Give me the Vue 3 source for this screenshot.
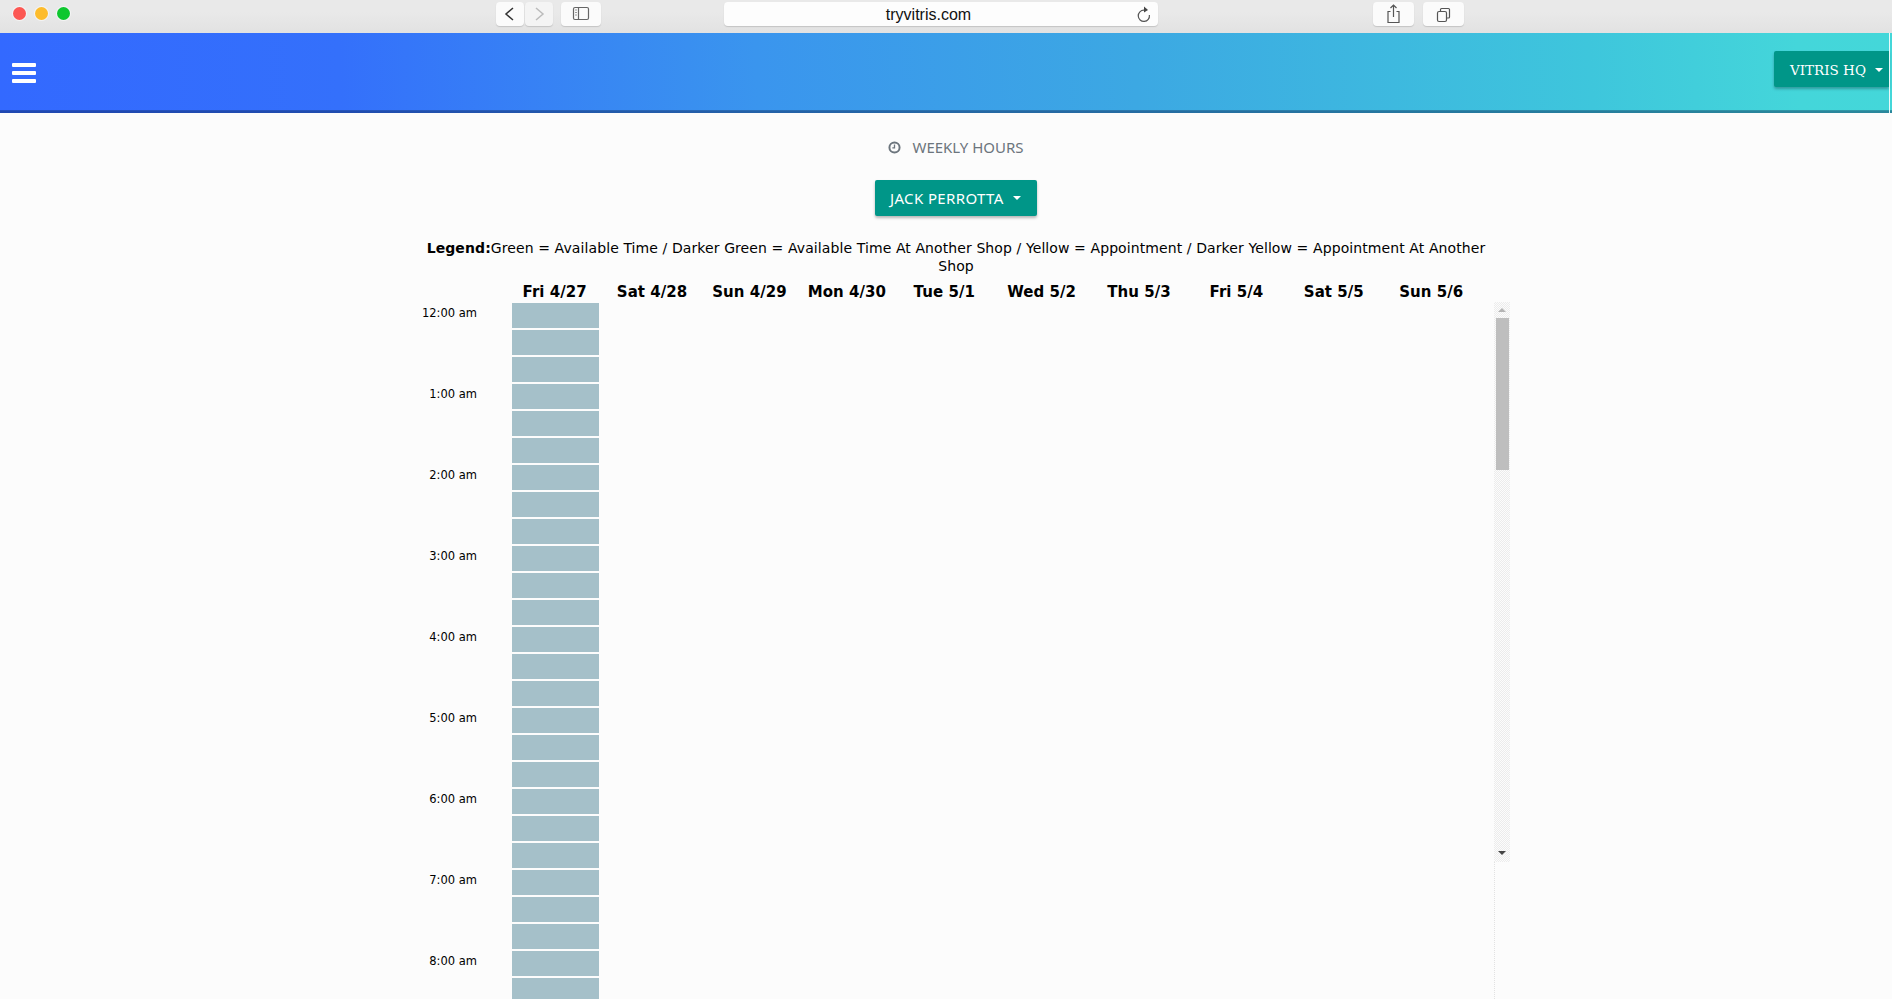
<script setup>
const days = ['Fri 4/27','Sat 4/28','Sun 4/29','Mon 4/30','Tue 5/1','Wed 5/2','Thu 5/3','Fri 5/4','Sat 5/5','Sun 5/6']
const hours = ['12:00 am','1:00 am','2:00 am','3:00 am','4:00 am','5:00 am','6:00 am','7:00 am','8:00 am']
const slots = Array.from({ length: 27 }, (_, i) => i)
</script>

<template>
  <div class="page">
    <header class="chrome">
      <div class="lights">
        <span class="light red"></span>
        <span class="light yellow"></span>
        <span class="light green"></span>
      </div>
      <div class="ch-btn back">
        <svg width="28" height="24" viewBox="0 0 28 24"><path d="M17 6 10 12 17 18" fill="none" stroke="#333" stroke-width="1.5"/></svg>
      </div>
      <div class="ch-btn forward">
        <svg width="28" height="24" viewBox="0 0 28 24"><path d="M11 6 18 12 11 18" fill="none" stroke="#bbb" stroke-width="1.5"/></svg>
      </div>
      <div class="ch-btn sidebar">
        <svg width="40" height="24" viewBox="0 0 40 24"><rect x="12.5" y="5.5" width="15" height="12" rx="1.5" fill="none" stroke="#666" stroke-width="1.2"/><path d="M17.5 5.5v12" stroke="#666" stroke-width="1.2"/><path d="M14 8h2M14 10.5h2M14 13h2" stroke="#999" stroke-width="1"/></svg>
      </div>
      <div class="url">
        <span class="url-text">tryvitris.com</span>
        <svg class="reload" width="16" height="18" viewBox="0 0 16 18"><path d="M8 4.2A5.6 5.6 0 1 0 13.4 9" transform="translate(-1 1)" fill="none" stroke="#555" stroke-width="1.2"/><path d="M7 1.5 11 5 7 7.5Z" fill="#444"/></svg>
      </div>
      <div class="ch-btn share">
        <svg width="41" height="24" viewBox="0 0 41 24"><path d="M17.5 9.5H15v11h11v-11h-2.500M20.500 15V3.500M17.500 6l3-3 3 3" fill="none" stroke="#555" stroke-width="1.2"/></svg>
      </div>
      <div class="ch-btn tabs">
        <svg width="41" height="24" viewBox="0 0 41 24"><rect x="14.500" y="9.500" width="9" height="10" rx="1.500" fill="none" stroke="#555" stroke-width="1.2"/><path d="M17.500 9V7.500a1 1 0 0 1 1-1h7a1 1 0 0 1 1 1V15a1 1 0 0 1-1 1H24" fill="none" stroke="#555" stroke-width="1.2"/></svg>
      </div>
    </header>

    <nav class="navbar">
      <div class="burger"><span></span><span></span><span></span></div>
      <button class="btn shop">VITRIS HQ<i class="caret"></i></button>
    </nav>

    <main class="content">
      <h1 class="title">
        <svg class="clock" width="13" height="13" viewBox="0 0 12 12"><circle cx="6" cy="6" r="4.700" fill="none" stroke="#6c757d" stroke-width="1.800"/><path d="M6 3.200V6.300H4" fill="none" stroke="#6c757d" stroke-width="1.200"/></svg>
        WEEKLY HOURS
      </h1>
      <button class="btn person">JACK PERROTTA<i class="caret"></i></button>
      <p class="legend"><b>Legend:</b>Green = Available Time / Darker Green = Available Time At Another Shop / Yellow = Appointment / Darker Yellow = Appointment At Another Shop</p>

      <div class="day-heads">
        <div v-for="d in days" :key="d" class="day-head">{{ d }}</div>
      </div>

      <div class="schedule">
        <div class="times">
          <div v-for="h in hours" :key="h" class="time">{{ h }}</div>
        </div>
        <div class="days">
          <div v-for="(d, i) in days" :key="d" class="day">
            <template v-if="i === 0">
              <div v-for="s in slots" :key="s" class="slot"></div>
            </template>
          </div>
        </div>
        <div class="scroll-col">
          <div class="track">
            <span class="arrow up"></span>
            <span class="thumb"></span>
            <span class="arrow down"></span>
          </div>
        </div>
      </div>
    </main>
  </div>
</template>

<style scoped>
.page {
  width: 1892px;
  height: 999px;
  overflow: hidden;
  background: #fcfcfc;
  font-family: "DejaVu Sans", sans-serif;
  color: #000;
}

.chrome {
  height: 33px;
  box-sizing: border-box;
  display: flex;
  padding-top: 2px;
  background: linear-gradient(#e9e9e9 0, #e9e9e9 12px, #e2e2e2 33px);
}
.lights { display: flex; gap: 9px; padding: 5px 0 0 13px; width: 495.500px; box-sizing: border-box; }
.light { width: 13px; height: 13px; border-radius: 50%; box-shadow: 0 0 0 1px #f4f4f4; }
.red { background: #fc5753; }
.yellow { background: #fdbc2c; }
.green { background: #0ec72f; }

.ch-btn {
  height: 24px;
  border-radius: 4px;
  background: #fbfbfb;
  box-shadow: 0 1px 1px #c4c4c4;
}
.back { width: 28px; }
.forward { width: 28px; margin-left: 1px; background: #f4f4f4; }
.sidebar { width: 40px; margin-left: 8px; }
.share { width: 41px; margin-left: 215px; }
.tabs { width: 41px; margin-left: 9px; }
.ch-btn svg { display: block; }

.url {
  width: 434px;
  height: 24px;
  margin-left: 123px;
  border-radius: 4px;
  background: #fdfdfd;
  box-shadow: 0 1px 1px #c4c4c4;
  position: relative;
  text-align: center;
  font: 16px/26px "Liberation Sans", sans-serif;
  color: #111;
}
.url-text { display: inline-block; margin-right: 24px; }
.reload { position: absolute; right: 5px; top: 3px; }

.navbar {
  height: 80px;
  box-sizing: border-box;
  display: flex;
  align-items: flex-start;
  justify-content: space-between;
  padding: 18px 3px 0 12px;
  position: relative;
  background: linear-gradient(88deg, #3369ff 0, #3470fb 18%, #3a95ee 40%, #3ca8e3 60%, #3ec6dc 84%, #44d6da 95%, #44d7d9 100%);
  box-shadow: inset 0 -2px 0 rgba(10, 30, 90, .12), inset 0 -3px 0 rgba(10, 30, 70, .35);
}
.navbar::after {
  content: "";
  position: absolute;
  top: 0;
  bottom: 0;
  right: 2px;
  width: 1px;
  background: #eafafa;
}
.burger { display: flex; flex-direction: column; gap: 4px; padding-top: 12px; }
.burger span { display: block; width: 24px; height: 4px; background: #fff; border-radius: 1px; }

.btn {
  display: flex;
  align-items: center;
  background: #009688;
  color: #fff;
  border: 0;
  border-radius: 2px;
  box-shadow: 0 2px 3px rgba(0, 0, 0, .28);
  font-size: 14px;
  padding: 0;
}
.caret {
  display: block;
  width: 0;
  height: 0;
  border-left: 4px solid transparent;
  border-right: 4px solid transparent;
  border-top: 4px solid #fff;
}
.shop {
  width: 115px;
  height: 36px;
  padding: 1px 0 0 16px;
  border-radius: 2px 0 0 2px;
  font-family: "DejaVu Serif", serif;
  font-size: 13.500px;
}
.shop .caret { margin-left: 9px; }
.person {
  width: 162px;
  height: 36px;
  padding-left: 15px;
  margin: 23px auto 0;
  font-family: "Noto Sans", sans-serif;
  font-size: 15px;
  letter-spacing: .37px;
}
.person .caret { margin-left: 9px; }

.content {
  width: 1070px;
  margin-left: 421px;
  text-align: center;
}
.title {
  margin: 0;
  padding-top: 24px;
  display: flex;
  align-items: center;
  justify-content: center;
  gap: 11px;
  height: 20px;
  font: 400 15px/20px "Noto Sans", sans-serif;
  color: #6c757d;
}
.clock { display: block; }

.legend {
  margin: 23px 0 8px;
  font-size: 14px;
  letter-spacing: .095px;
  line-height: 18px;
}

.day-heads {
  display: grid;
  grid-template-columns: repeat(10, 97.400px);
  margin-left: 85px;
  height: 20px;
}
.day-head { font-weight: 700; font-size: 15px; letter-spacing: .05px; line-height: 18px; white-space: nowrap; }

.schedule {
  display: flex;
  width: 1090px;
  margin-left: -1px;
  align-items: flex-start;
}
.times { width: 57px; padding-right: 30px; text-align: right; flex: none; }
.time { height: 81px; font-size: 11.500px; line-height: 20px; white-space: nowrap; }
.days { display: grid; grid-template-columns: repeat(10, 97.400px); flex: none; }
.day { padding: 0 5.200px; }
.slot { height: 25px; margin-bottom: 2px; background: #a5c0c9; }

.scroll-col {
  flex: none;
  width: 16px;
  margin-left: 13px;
  height: 700px;
  margin-top: -1px;
  background: linear-gradient(#e2e2e2 50%, transparent 50%) 0 0 / 1px 2px repeat-y;
}
.track {
  height: 560px;
  box-sizing: border-box;
  display: flex;
  flex-direction: column;
  align-items: center;
  padding-top: 6px;
  background: repeating-conic-gradient(#ececec 0 25%, #fcfcfc 0 50%) 0 0 / 2px 2px;
}
.arrow { display: block; width: 0; height: 0; border-left: 4px solid transparent; border-right: 4px solid transparent; }
.arrow.up { border-bottom: 4px solid #b4b4b4; }
.arrow.down { border-top: 4px solid #444; margin-top: 381px; }
.thumb { display: block; width: 13px; height: 152px; margin: 6px 0 0 1px; background: #bebebe; }
</style>

<style>
html, body { margin: 0; overflow: hidden; }
</style>
